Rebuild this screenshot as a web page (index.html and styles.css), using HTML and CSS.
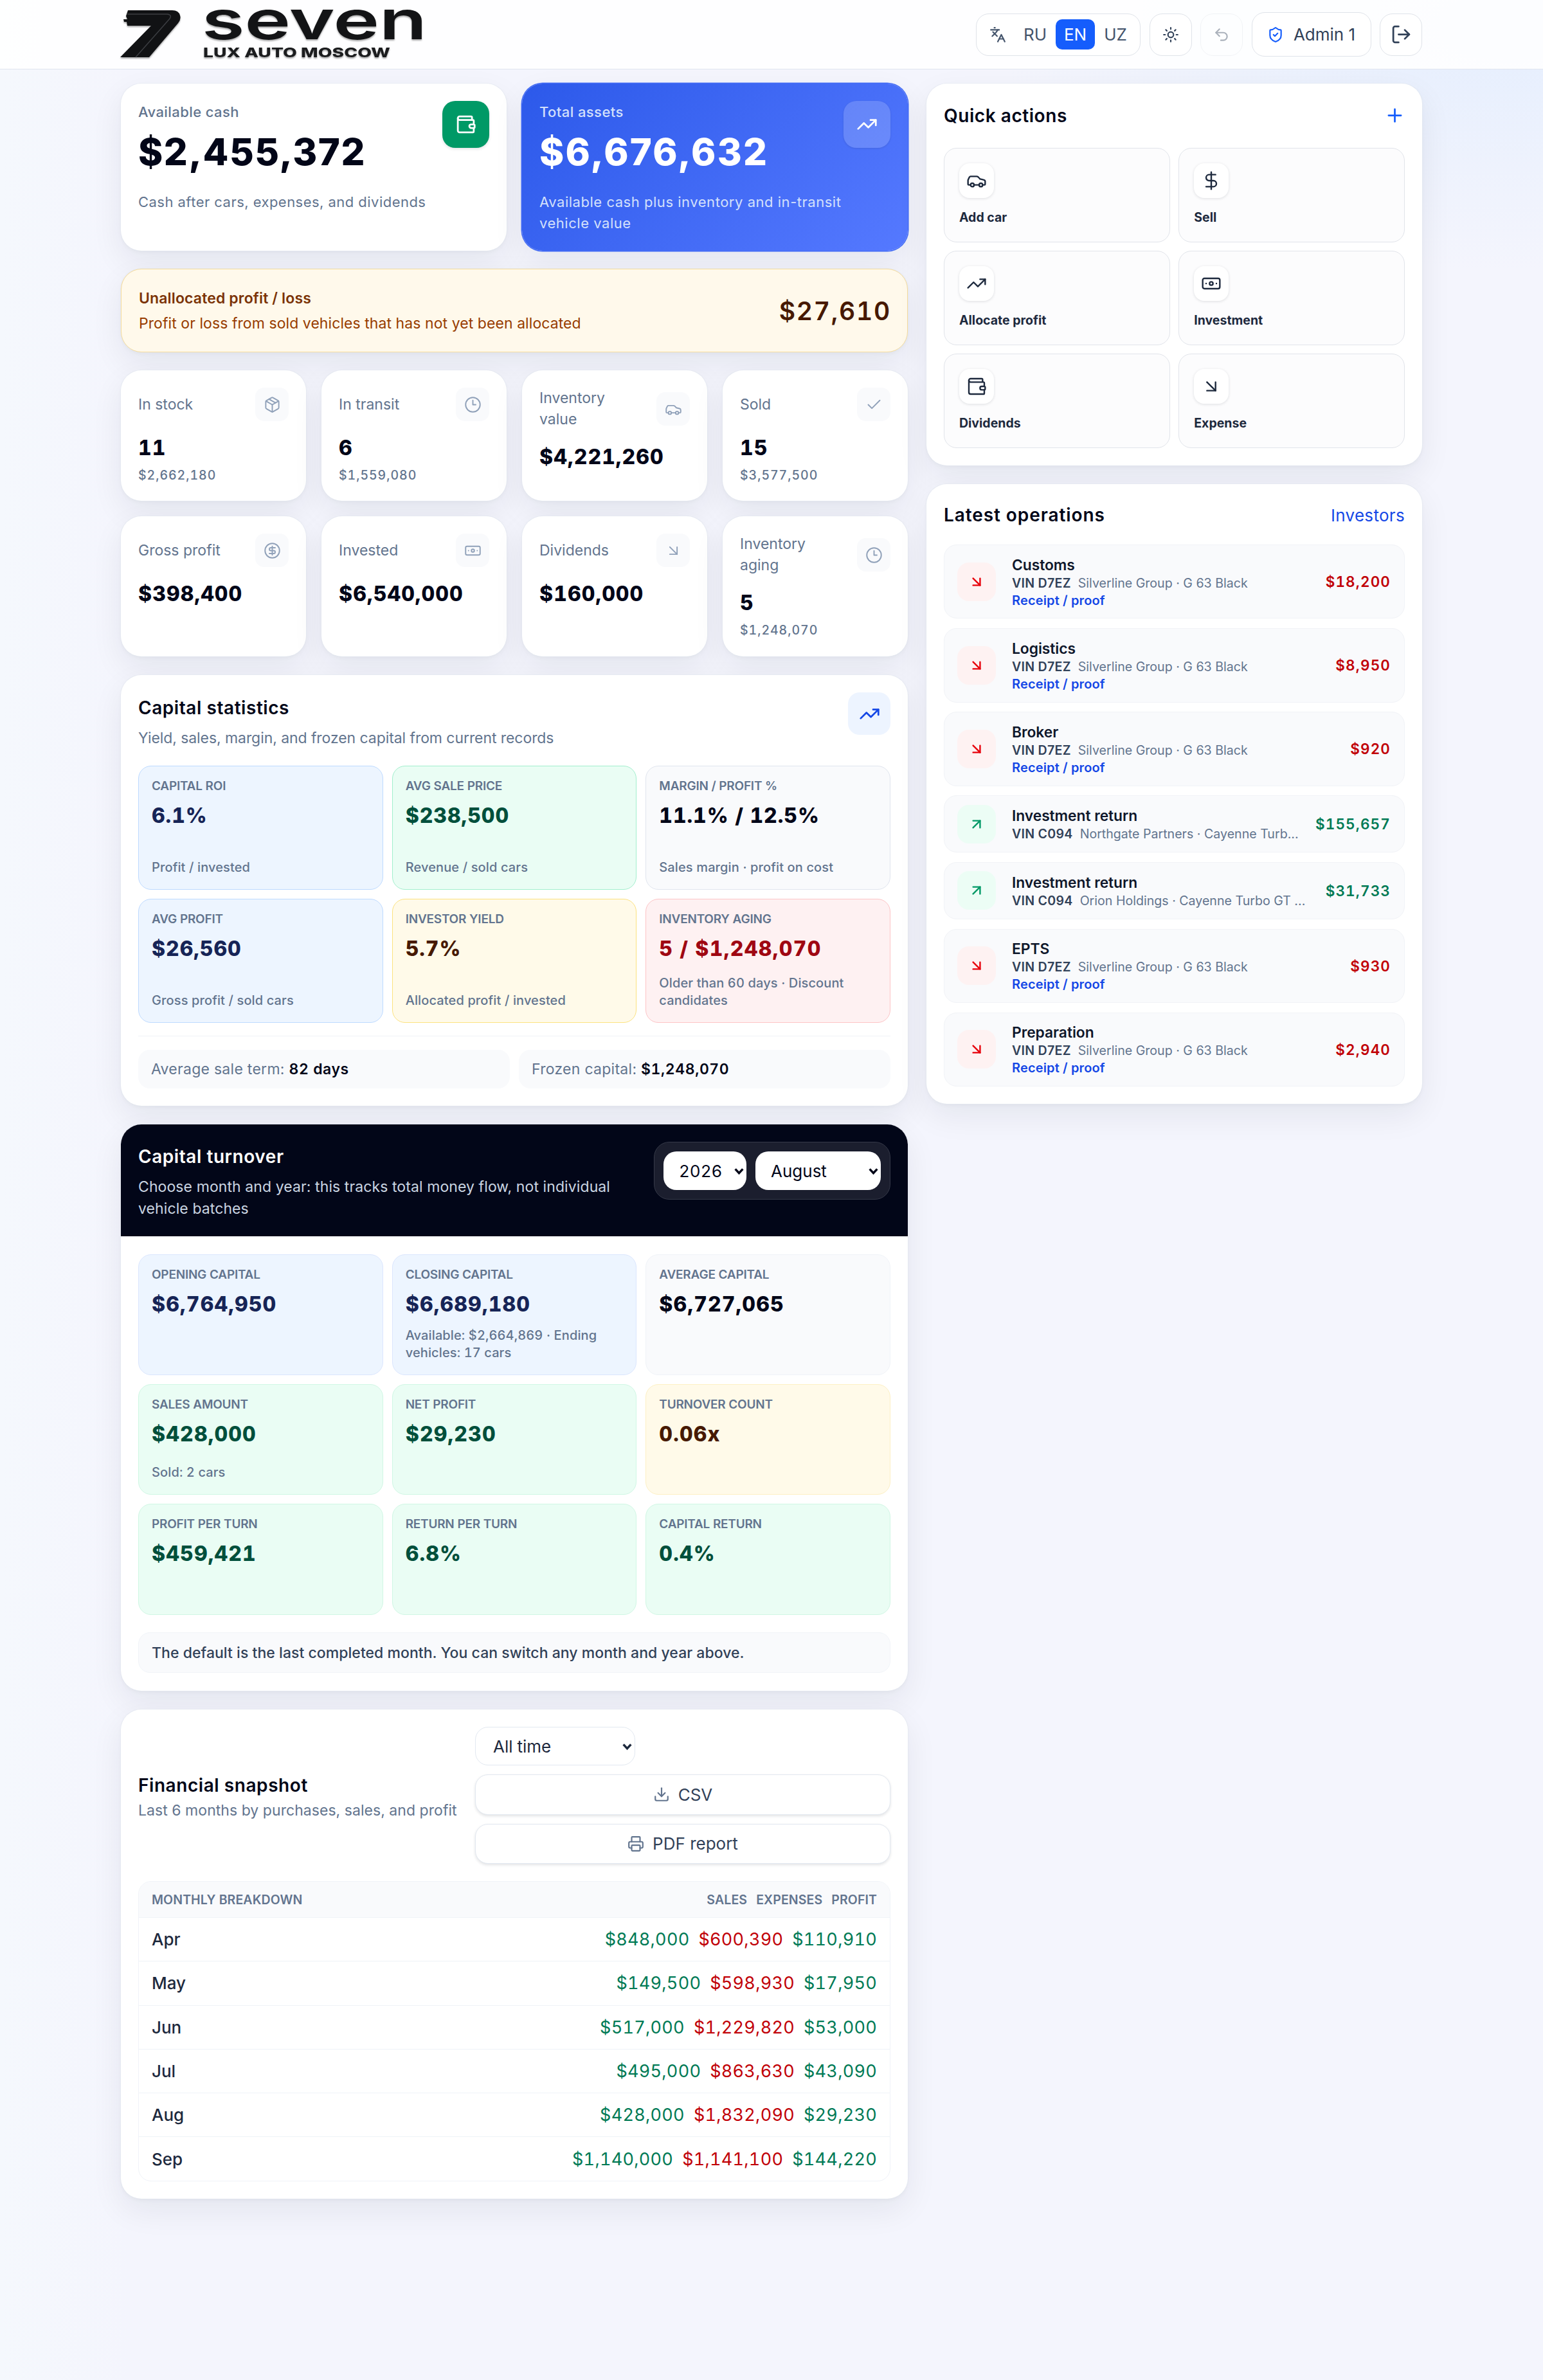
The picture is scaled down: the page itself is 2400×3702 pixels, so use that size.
FILE: index.html
```html
<!DOCTYPE html>
<html lang="en">
<head>
    <meta charset="UTF-8">
    <title>Seven Lux Auto Moscow</title>
    <link rel="stylesheet" href="styles.css">
</head>
<body>
    <!-- Icon set -->
    <svg class="sprite" xmlns="http://www.w3.org/2000/svg">
        <symbol id="i-wallet" viewBox="0 0 24 24"><path d="M19 7V4a1 1 0 0 0-1-1H5a2 2 0 0 0 0 4h15a1 1 0 0 1 1 1v4h-3a2 2 0 0 0 0 4h3a1 1 0 0 0 1-1v-2a1 1 0 0 0-1-1"/><path d="M3 5v14a2 2 0 0 0 2 2h15a1 1 0 0 0 1-1v-4"/></symbol>
        <symbol id="i-trend" viewBox="0 0 24 24"><path d="M16 7h6v6"/><path d="m22 7-8.5 8.5-5-5L2 17"/></symbol>
        <symbol id="i-box" viewBox="0 0 24 24"><path d="M11 21.73a2 2 0 0 0 2 0l7-4A2 2 0 0 0 21 16V8a2 2 0 0 0-1-1.73l-7-4a2 2 0 0 0-2 0l-7 4A2 2 0 0 0 3 8v8a2 2 0 0 0 1 1.73z"/><path d="M12 22V12"/><path d="M3.3 7 12 12l8.7-5"/><path d="m7.5 4.27 9 5.15"/></symbol>
        <symbol id="i-clock" viewBox="0 0 24 24"><circle cx="12" cy="12" r="10"/><path d="M12 6v6h4"/></symbol>
        <symbol id="i-car" viewBox="0 0 24 24"><path d="M19 17h2c.6 0 1-.4 1-1v-3c0-.9-.7-1.7-1.5-1.9C18.7 10.6 16 10 16 10s-1.3-1.4-2.2-2.3c-.5-.4-1.1-.7-1.8-.7H5c-.6 0-1.1.4-1.4.9l-1.4 2.9A3.7 3.7 0 0 0 2 12v4c0 .6.4 1 1 1h2"/><circle cx="7" cy="17" r="2"/><path d="M9 17h6"/><circle cx="17" cy="17" r="2"/></symbol>
        <symbol id="i-check" viewBox="0 0 24 24"><path d="M20 6 9 17l-5-5"/></symbol>
        <symbol id="i-coin" viewBox="0 0 24 24"><circle cx="12" cy="12" r="10"/><path d="M16 8h-6a2 2 0 1 0 0 4h4a2 2 0 1 1 0 4H8"/><path d="M12 18V6"/></symbol>
        <symbol id="i-note" viewBox="0 0 24 24"><rect x="2" y="6" width="20" height="12" rx="2"/><circle cx="12" cy="12" r="2"/><path d="M6 12h.01M18 12h.01"/></symbol>
        <symbol id="i-down" viewBox="0 0 24 24"><path d="m7 7 10 10"/><path d="M17 7v10H7"/></symbol>
        <symbol id="i-up" viewBox="0 0 24 24"><path d="M7 7h10v10"/><path d="M7 17 17 7"/></symbol>
        <symbol id="i-dollar" viewBox="0 0 24 24"><path d="M12 2v20"/><path d="M17 5H9.5a3.5 3.5 0 0 0 0 7h5a3.5 3.5 0 0 1 0 7H6"/></symbol>
        <symbol id="i-plus" viewBox="0 0 24 24"><path d="M5 12h14M12 5v14"/></symbol>
        <symbol id="i-lang" viewBox="0 0 24 24"><path d="m5 8 6 6"/><path d="m4 14 6-6 2-3"/><path d="M2 5h12"/><path d="M7 2h1"/><path d="m22 22-5-10-5 10"/><path d="M14 18h6"/></symbol>
        <symbol id="i-sun" viewBox="0 0 24 24"><circle cx="12" cy="12" r="4"/><path d="M12 2v2M12 20v2M4.93 4.93l1.41 1.41M17.66 17.66l1.41 1.41M2 12h2M20 12h2M6.34 17.66l-1.41 1.41M19.07 4.93l-1.41 1.41"/></symbol>
        <symbol id="i-undo" viewBox="0 0 24 24"><path d="M9 14 4 9l5-5"/><path d="M4 9h10.5a5.5 5.5 0 0 1 0 11H11"/></symbol>
        <symbol id="i-shield" viewBox="0 0 24 24"><path d="M20 13c0 5-3.5 7.5-7.66 8.95a1 1 0 0 1-.67-.01C7.5 20.5 4 18 4 13V6a1 1 0 0 1 1-1c2 0 4.5-1.2 6.24-2.72a1.17 1.17 0 0 1 1.52 0C14.51 3.81 17 5 19 5a1 1 0 0 1 1 1z"/><path d="m9 12 2 2 4-4"/></symbol>
        <symbol id="i-exit" viewBox="0 0 24 24"><path d="m16 17 5-5-5-5"/><path d="M21 12H9"/><path d="M9 21H5a2 2 0 0 1-2-2V5a2 2 0 0 1 2-2h4"/></symbol>
        <symbol id="i-save" viewBox="0 0 24 24"><path d="M12 15V3"/><path d="M21 15v4a2 2 0 0 1-2 2H5a2 2 0 0 1-2-2v-4"/><path d="m7 10 5 5 5-5"/></symbol>
        <symbol id="i-print" viewBox="0 0 24 24"><path d="M6 18H4a2 2 0 0 1-2-2v-5a2 2 0 0 1 2-2h16a2 2 0 0 1 2 2v5a2 2 0 0 1-2 2h-2"/><path d="M6 9V3a1 1 0 0 1 1-1h10a1 1 0 0 1 1 1v6"/><rect x="6" y="14" width="12" height="8" rx="1"/></symbol>
        <symbol id="i-chev" viewBox="0 0 16 12"><path d="M2.5 3 8 9l5.5-6"/></symbol>
    </svg>

    <header class="topbar">
        <div class="topbar-inner">
            <svg class="logo" viewBox="0 0 476 88">
                <g class="logo-mark">
                    <path d="M12 6h69q10 0 12 8 2 6-3 12L45 79H0l48-49H11l-1-6H6l-1-4h6l-2-5z"/>
                    <path class="logo-line" d="M11 12h62q8 1 4 7L24 79"/>
                </g>
                <text class="logo-name" x="127" y="51" textLength="350" lengthAdjust="spacingAndGlyphs">seven</text>
                <text class="logo-sub" x="129" y="79" textLength="291" lengthAdjust="spacingAndGlyphs">LUX AUTO MOSCOW</text>
            </svg>
            <div class="tools">
                <div class="lang">
                    <svg class="ico"><use href="#i-lang"/></svg>
                    <span>RU</span><span class="active">EN</span><span>UZ</span>
                </div>
                <button class="tool"><svg class="ico"><use href="#i-sun"/></svg></button>
                <button class="tool off"><svg class="ico"><use href="#i-undo"/></svg></button>
                <button class="tool user"><svg class="ico"><use href="#i-shield"/></svg>Admin 1</button>
                <button class="tool exit"><svg class="ico"><use href="#i-exit"/></svg></button>
            </div>
        </div>
    </header>

    <main class="layout">
        <div class="col-main">
            <div class="hero-row">
                <section class="card hero">
                    <div class="hero-text">
                        <div class="hero-label">Available cash</div>
                        <div class="hero-value">$2,455,372</div>
                        <p class="hero-sub">Cash after cars, expenses, and dividends</p>
                    </div>
                    <span class="hero-icon"><svg class="ico"><use href="#i-wallet"/></svg></span>
                </section>
                <section class="card hero blue">
                    <div class="hero-text">
                        <div class="hero-label">Total assets</div>
                        <div class="hero-value">$6,676,632</div>
                        <p class="hero-sub">Available cash plus inventory and in-transit<br>vehicle value</p>
                    </div>
                    <span class="hero-icon"><svg class="ico"><use href="#i-trend"/></svg></span>
                </section>
            </div>

            <section class="card pending">
                <div>
                    <div class="pending-title">Unallocated profit / loss</div>
                    <div class="pending-sub">Profit or loss from sold vehicles that has not yet been allocated</div>
                </div>
                <div class="pending-value">$27,610</div>
            </section>

            <div class="stat-grid">
                <div class="card stat">
                    <div class="stat-head">In stock<span class="stat-icon"><svg class="ico"><use href="#i-box"/></svg></span></div>
                    <div class="stat-value">11</div>
                    <div class="stat-sub">$2,662,180</div>
                </div>
                <div class="card stat">
                    <div class="stat-head">In transit<span class="stat-icon"><svg class="ico"><use href="#i-clock"/></svg></span></div>
                    <div class="stat-value">6</div>
                    <div class="stat-sub">$1,559,080</div>
                </div>
                <div class="card stat">
                    <div class="stat-head">Inventory<br>value<span class="stat-icon"><svg class="ico"><use href="#i-car"/></svg></span></div>
                    <div class="stat-value">$4,221,260</div>
                </div>
                <div class="card stat">
                    <div class="stat-head">Sold<span class="stat-icon"><svg class="ico"><use href="#i-check"/></svg></span></div>
                    <div class="stat-value">15</div>
                    <div class="stat-sub">$3,577,500</div>
                </div>
                <div class="card stat">
                    <div class="stat-head">Gross profit<span class="stat-icon"><svg class="ico"><use href="#i-coin"/></svg></span></div>
                    <div class="stat-value">$398,400</div>
                </div>
                <div class="card stat">
                    <div class="stat-head">Invested<span class="stat-icon"><svg class="ico"><use href="#i-note"/></svg></span></div>
                    <div class="stat-value">$6,540,000</div>
                </div>
                <div class="card stat">
                    <div class="stat-head">Dividends<span class="stat-icon"><svg class="ico"><use href="#i-down"/></svg></span></div>
                    <div class="stat-value">$160,000</div>
                </div>
                <div class="card stat">
                    <div class="stat-head">Inventory<br>aging<span class="stat-icon"><svg class="ico"><use href="#i-clock"/></svg></span></div>
                    <div class="stat-value">5</div>
                    <div class="stat-sub">$1,248,070</div>
                </div>
            </div>

            <section class="card capital">
                <div class="section-head">
                    <div>
                        <h2>Capital statistics</h2>
                        <p>Yield, sales, margin, and frozen capital from current records</p>
                    </div>
                    <span class="head-icon"><svg class="ico"><use href="#i-trend"/></svg></span>
                </div>
                <div class="tiles strong">
                    <div class="tile t-blue"><span>Capital ROI</span><b>6.1%</b><small>Profit / invested</small></div>
                    <div class="tile t-green"><span>Avg sale price</span><b>$238,500</b><small>Revenue / sold cars</small></div>
                    <div class="tile"><span>Margin / profit %</span><b>11.1% / 12.5%</b><small>Sales margin · profit on cost</small></div>
                    <div class="tile t-blue"><span>Avg profit</span><b>$26,560</b><small>Gross profit / sold cars</small></div>
                    <div class="tile t-amber"><span>Investor yield</span><b>5.7%</b><small>Allocated profit / invested</small></div>
                    <div class="tile t-red"><span>Inventory aging</span><b>5 / $1,248,070</b><small>Older than 60 days · Discount<br>candidates</small></div>
                </div>
                <div class="chips">
                    <div class="chip">Average sale term: <b>82 days</b></div>
                    <div class="chip">Frozen capital: <b>$1,248,070</b></div>
                </div>
            </section>

            <section class="card turnover">
                <div class="turnover-head">
                    <div>
                        <h2>Capital turnover</h2>
                        <p>Choose month and year: this tracks total money flow, not individual<br>vehicle batches</p>
                    </div>
                    <div class="pickers">
                        <div class="select year">2026<svg class="chev"><use href="#i-chev"/></svg></div>
                        <div class="select month">August<svg class="chev"><use href="#i-chev"/></svg></div>
                    </div>
                </div>
                <div class="turnover-body">
                    <div class="tiles">
                        <div class="tile t-blue"><span>Opening capital</span><b>$6,764,950</b></div>
                        <div class="tile t-blue"><span>Closing capital</span><b>$6,689,180</b><small>Available: $2,664,869 · Ending<br>vehicles: 17 cars</small></div>
                        <div class="tile"><span>Average capital</span><b>$6,727,065</b></div>
                        <div class="tile t-green"><span>Sales amount</span><b>$428,000</b><small>Sold: 2 cars</small></div>
                        <div class="tile t-green"><span>Net profit</span><b>$29,230</b></div>
                        <div class="tile t-amber"><span>Turnover count</span><b>0.06x</b></div>
                        <div class="tile t-green"><span>Profit per turn</span><b>$459,421</b></div>
                        <div class="tile t-green"><span>Return per turn</span><b>6.8%</b></div>
                        <div class="tile t-green"><span>Capital return</span><b>0.4%</b></div>
                    </div>
                    <div class="hint">The default is the last completed month. You can switch any month and year above.</div>
                </div>
            </section>

            <section class="card snapshot">
                <div class="snapshot-head">
                    <div class="snapshot-title">
                        <h2>Financial snapshot</h2>
                        <p>Last 6 months by purchases, sales, and profit</p>
                    </div>
                    <div class="snapshot-actions">
                        <div class="select period">All time<svg class="chev"><use href="#i-chev"/></svg></div>
                        <button class="btn"><svg class="ico"><use href="#i-save"/></svg>CSV</button>
                        <button class="btn"><svg class="ico"><use href="#i-print"/></svg>PDF report</button>
                    </div>
                </div>
                <div class="months">
                    <div class="months-head"><span>Monthly breakdown</span><div><span>Sales</span><span>Expenses</span><span>Profit</span></div></div>
                    <div class="month-row">Apr<div><i>$848,000</i><i class="out">$600,390</i><i>$110,910</i></div></div>
                    <div class="month-row">May<div><i>$149,500</i><i class="out">$598,930</i><i>$17,950</i></div></div>
                    <div class="month-row">Jun<div><i>$517,000</i><i class="out">$1,229,820</i><i>$53,000</i></div></div>
                    <div class="month-row">Jul<div><i>$495,000</i><i class="out">$863,630</i><i>$43,090</i></div></div>
                    <div class="month-row">Aug<div><i>$428,000</i><i class="out">$1,832,090</i><i>$29,230</i></div></div>
                    <div class="month-row">Sep<div><i>$1,140,000</i><i class="out">$1,141,100</i><i>$144,220</i></div></div>
                </div>
            </section>
        </div>

        <aside class="col-side">
            <section class="card side-card">
                <div class="side-head quick-head"><h2>Quick actions</h2><svg class="ico"><use href="#i-plus"/></svg></div>
                <div class="quick-grid">
                    <a class="quick"><span class="quick-icon"><svg class="ico"><use href="#i-car"/></svg></span>Add car</a>
                    <a class="quick"><span class="quick-icon"><svg class="ico"><use href="#i-dollar"/></svg></span>Sell</a>
                    <a class="quick"><span class="quick-icon"><svg class="ico"><use href="#i-trend"/></svg></span>Allocate profit</a>
                    <a class="quick"><span class="quick-icon"><svg class="ico"><use href="#i-note"/></svg></span>Investment</a>
                    <a class="quick"><span class="quick-icon"><svg class="ico"><use href="#i-wallet"/></svg></span>Dividends</a>
                    <a class="quick"><span class="quick-icon"><svg class="ico"><use href="#i-down"/></svg></span>Expense</a>
                </div>
            </section>

            <section class="card side-card">
                <div class="side-head"><h2 class="wide">Latest operations</h2><a class="more">Investors</a></div>
                <div class="ops">
                    <div class="op">
                        <span class="op-icon"><svg class="ico"><use href="#i-down"/></svg></span>
                        <div class="op-text"><h3>Customs</h3><p><b>VIN D7EZ</b>Silverline Group · G 63 Black</p><a>Receipt / proof</a></div>
                        <div class="op-sum">$18,200</div>
                    </div>
                    <div class="op">
                        <span class="op-icon"><svg class="ico"><use href="#i-down"/></svg></span>
                        <div class="op-text"><h3>Logistics</h3><p><b>VIN D7EZ</b>Silverline Group · G 63 Black</p><a>Receipt / proof</a></div>
                        <div class="op-sum">$8,950</div>
                    </div>
                    <div class="op">
                        <span class="op-icon"><svg class="ico"><use href="#i-down"/></svg></span>
                        <div class="op-text"><h3>Broker</h3><p><b>VIN D7EZ</b>Silverline Group · G 63 Black</p><a>Receipt / proof</a></div>
                        <div class="op-sum">$920</div>
                    </div>
                    <div class="op in">
                        <span class="op-icon"><svg class="ico"><use href="#i-up"/></svg></span>
                        <div class="op-text"><h3>Investment return</h3><p><b>VIN C094</b>Northgate Partners · Cayenne Turb...</p></div>
                        <div class="op-sum">$155,657</div>
                    </div>
                    <div class="op in">
                        <span class="op-icon"><svg class="ico"><use href="#i-up"/></svg></span>
                        <div class="op-text"><h3>Investment return</h3><p><b>VIN C094</b>Orion Holdings · Cayenne Turbo GT ...</p></div>
                        <div class="op-sum">$31,733</div>
                    </div>
                    <div class="op">
                        <span class="op-icon"><svg class="ico"><use href="#i-down"/></svg></span>
                        <div class="op-text"><h3>EPTS</h3><p><b>VIN D7EZ</b>Silverline Group · G 63 Black</p><a>Receipt / proof</a></div>
                        <div class="op-sum">$930</div>
                    </div>
                    <div class="op">
                        <span class="op-icon"><svg class="ico"><use href="#i-down"/></svg></span>
                        <div class="op-text"><h3>Preparation</h3><p><b>VIN D7EZ</b>Silverline Group · G 63 Black</p><a>Receipt / proof</a></div>
                        <div class="op-sum">$2,940</div>
                    </div>
                </div>
            </section>
        </aside>
    </main>
</body>
</html>
```
FILE: styles.css
```css
* {
    box-sizing: border-box;
}
body {
    margin: 0;
    min-height: 3702px;
    font-family: Inter, "Liberation Sans", sans-serif;
    font-size: 23px;
    color: #020618;
    background:
        radial-gradient(ellipse 800px 380px at 2350px 40px, rgba(214, 231, 254, 0.5), transparent),
        linear-gradient(90deg, #f5f8fd 0, #f4f5fd 200px, #f4f5fd 100%);
}
h2, h3, p {
    margin: 0;
    font-weight: 400;
}
button {
    font-family: inherit;
}
.sprite {
    display: none;
}
.ico {
    width: 26px;
    height: 26px;
    flex-shrink: 0;
    fill: none;
    stroke: currentColor;
    stroke-width: 2;
    stroke-linecap: round;
    stroke-linejoin: round;
}

/* Top bar */
.topbar {
    height: 108px;
    background: rgba(255, 255, 255, 0.88);
    border-bottom: 1px solid #e0e5ee;
}
.topbar-inner {
    width: 2024px;
    height: 107px;
    margin: 0 auto;
    display: flex;
    justify-content: space-between;
    align-items: center;
}
.logo {
    width: 476px;
    height: 88px;
    margin-left: -1px;
    overflow: visible;
    filter: drop-shadow(0 2px 1px rgba(0, 0, 0, 0.35));
}
.logo-mark path {
    fill: #111214;
}
.logo-mark .logo-line {
    fill: none;
    stroke: #3c3e42;
    stroke-width: 1.5;
}
.logo-name {
    font-size: 84px;
    font-weight: 600;
    fill: #131416;
}
.logo-sub {
    font-size: 20px;
    font-weight: 800;
    fill: #1b1c1e;
}
.tools {
    display: flex;
    align-items: center;
    gap: 13.5px;
}
.lang, .tool {
    height: 66px;
    display: flex;
    align-items: center;
    background: #fff;
    border: 1px solid #dfe3e9;
    border-radius: 20px;
    color: #45556c;
    font-size: 26px;
}
.lang {
    width: 256px;
    padding: 0 6px 0 20px;
    gap: 1.5px;
}
.lang .ico {
    margin-right: 13px;
}
.lang span {
    width: 61px;
    height: 47px;
    line-height: 47px;
    text-align: center;
    border-radius: 10px;
}
.lang .active {
    background: #155dfc;
    color: #fff;
}
.tool {
    width: 66px;
    padding: 0;
    justify-content: center;
    color: #314158;
}
.tool.off {
    opacity: 0.4;
}
.tool.user {
    width: 186px;
    height: 69px;
    gap: 15px;
}
.user .ico {
    color: #155dfc;
}
.exit .ico {
    width: 33px;
    height: 33px;
}

/* Page grid */
.layout {
    width: 2024px;
    margin: 22px auto 0;
    display: grid;
    grid-template-columns: 1224px 771px;
    gap: 29px;
    align-items: start;
}
.col-main, .col-side {
    display: flex;
    flex-direction: column;
    gap: 29px;
}
.card {
    background: #fff;
    border-radius: 32px;
    box-shadow: 0 0 0 1px rgba(226, 232, 240, 0.5), 0 3px 6px rgba(15, 23, 42, 0.03), 0 18px 50px rgba(15, 23, 42, 0.07);
}
h2 {
    font-size: 28px;
    font-weight: 600;
    line-height: 40px;
    letter-spacing: 0.02em;
}
h2.wide {
    letter-spacing: 0.033em;
}

/* Balance cards */
.hero-row {
    display: grid;
    grid-template-columns: 1fr 1fr;
    gap: 24px;
    margin-bottom: -1px;
}
.hero {
    display: flex;
    justify-content: space-between;
    height: 260px;
    padding: 28px 27px 0;
    color: #62748e;
}
.hero-label {
    font-size: 22px;
    font-weight: 500;
    line-height: 32px;
    letter-spacing: 0.019em;
}
.hero-value {
    margin-top: 16px;
    font-size: 58px;
    font-weight: 800;
    line-height: 60px;
    letter-spacing: 0.027em;
    color: #020618;
}
.hero-sub {
    margin-top: 32px;
    font-size: 22px;
    line-height: 33px;
    letter-spacing: 0.021em;
    white-space: nowrap;
}
.hero-icon {
    width: 73px;
    height: 73px;
    flex-shrink: 0;
    display: flex;
    align-items: center;
    justify-content: center;
    border-radius: 20px;
    background: #009966;
    color: #fff;
    margin-top: -1px;
    box-shadow: 0 2px 4px rgba(15, 23, 42, 0.12);
}
.hero-icon .ico {
    width: 33px;
    height: 33px;
}
.hero.blue {
    background: linear-gradient(135deg, #2c59ea, #5579ff);
    box-shadow: 0 0 0 1.5px #416af5, 0 18px 50px rgba(15, 23, 42, 0.07);
    color: #d3e0fb;
}
.blue .hero-value {
    color: #fff;
    letter-spacing: 0.038em;
}
.blue .hero-icon {
    background: rgba(255, 255, 255, 0.17);
    box-shadow: 0 1px 3px rgba(15, 23, 42, 0.12);
}
.blue .hero-sub {
    letter-spacing: 0.024em;
}

/* Unallocated profit */
.pending {
    height: 130px;
    margin-bottom: -1px;
    padding: 0 27px;
    display: flex;
    justify-content: space-between;
    align-items: center;
    border: 1px solid #f6dc9d;
    background: #fff9eb;
}
.pending-title {
    font-weight: 600;
    line-height: 34px;
    letter-spacing: 0.006em;
    color: #7b3306;
}
.pending-sub {
    margin-top: 6px;
    line-height: 33px;
    letter-spacing: 0.003em;
    color: #973c00;
}
.pending-value {
    font-size: 39px;
    font-weight: 600;
    letter-spacing: 0.045em;
    margin-right: -2px;
    font-variant-numeric: tabular-nums;
    color: #461901;
}

/* Small counters */
.stat-grid {
    display: grid;
    grid-template-columns: repeat(4, 1fr);
    grid-template-rows: 203px 218px;
    gap: 24px;
}
.stat {
    padding: 27px 27px 0;
}
.stat-head {
    min-height: 52px;
    display: grid;
    grid-template-columns: 1fr 52px;
    align-items: center;
    line-height: 33px;
    color: #62748e;
}
.stat-head br + .stat-icon {
    grid-column: 2;
    grid-row: 1 / 3;
}
.stat-icon {
    width: 52px;
    height: 52px;
    display: flex;
    align-items: center;
    justify-content: center;
    border-radius: 14px;
    background: #f9fafc;
    color: #90a1b9;
}
.stat-icon .ico {
    width: 27px;
    height: 27px;
    stroke-width: 1.7;
}
.stat-value {
    margin-top: 20px;
    font-size: 32px;
    font-weight: 800;
    line-height: 44px;
    letter-spacing: 0.034em;
    font-variant-numeric: tabular-nums;
}
.stat-sub {
    margin-top: 7px;
    font-size: 19.5px;
    font-weight: 500;
    line-height: 27px;
    letter-spacing: 0.05em;
    font-variant-numeric: tabular-nums;
    color: #62748e;
}

/* Capital statistics */
.capital {
    padding: 27px;
    height: 670px;
}
.section-head {
    display: flex;
    justify-content: space-between;
    height: 114px;
}
.section-head h2 {
    margin-top: 4px;
}
.section-head p {
    margin-top: 11px;
    line-height: 33px;
    letter-spacing: -0.003em;
    color: #62748e;
}
.head-icon {
    width: 66px;
    height: 66px;
    display: flex;
    align-items: center;
    justify-content: center;
    border-radius: 18px;
    background: #edf4ff;
    color: #1447e6;
}
.head-icon .ico {
    width: 33px;
    height: 33px;
}
.tiles {
    display: grid;
    grid-template-columns: repeat(3, 1fr);
    grid-template-rows: 187.5px 172.5px 172.5px;
    gap: 14px;
}
.tiles.strong {
    grid-template-rows: 193px 193px;
}
.tile {
    display: flex;
    flex-direction: column;
    padding: 21px 20px 20px;
    border: 1px solid #f0f3f8;
    border-radius: 20px;
    background: #f9fafc;
    font-variant-numeric: tabular-nums;
}
.tile span {
    font-size: 19px;
    font-weight: 600;
    line-height: 20px;
    letter-spacing: -0.012em;
    text-transform: uppercase;
    color: #62748e;
}
.tile b {
    margin-top: 14px;
    font-size: 32px;
    font-weight: 800;
    line-height: 44px;
    letter-spacing: 0.036em;
}
.tile small {
    margin-top: auto;
    font-size: 20px;
    font-weight: 500;
    line-height: 27px;
    letter-spacing: 0.006em;
    color: #62748e;
    white-space: nowrap;
}
.t-blue {
    background: #edf5ff;
    border-color: #dbe6fe;
}
.t-blue b {
    color: #162456;
}
.t-green {
    background: #eafdf4;
    border-color: #d0f7e4;
}
.t-green b {
    color: #004f3b;
}
.t-amber {
    background: #fffae9;
    border-color: #fdf0c4;
}
.t-amber b {
    color: #461901;
}
.t-red {
    background: #fef1f2;
}
.t-red b {
    color: #9f0712;
}
.strong .tile {
    border-color: #e0e5ee;
}
.strong .tile b {
    letter-spacing: 0.03em;
}
.strong .t-blue {
    border-color: #bddaff;
}
.strong .t-green {
    border-color: #a2efcd;
}
.strong .t-amber {
    border-color: #fce27f;
}
.strong .t-red {
    border-color: #fdc4c6;
}
.strong .t-red b {
    letter-spacing: 0.042em;
}
.chips {
    display: grid;
    grid-template-columns: 1fr 1fr;
    gap: 14px;
    margin-top: 20px;
    padding-top: 21px;
    border-top: 1px solid #eff3f7;
}
.chip {
    height: 60px;
    padding: 0 20px;
    line-height: 60px;
    border-radius: 18px;
    background: #f9fafc;
    letter-spacing: 0.012em;
    color: #62748e;
}
.chip b {
    font-weight: 600;
    letter-spacing: 0.025em;
    color: #020618;
    font-variant-numeric: tabular-nums;
}

/* Capital turnover */
.turnover {
    height: 881px;
    overflow: hidden;
}
.turnover-head {
    display: flex;
    justify-content: space-between;
    height: 174px;
    padding: 27px;
    background: #020618;
    color: #fff;
}
.turnover-head h2 {
    margin-top: 3px;
}
.turnover-head p {
    margin-top: 11px;
    line-height: 33.5px;
    letter-spacing: 0.004em;
    color: #cad5e2;
}
.pickers {
    display: flex;
    gap: 14px;
    width: 368px;
    height: 90px;
    padding: 14px;
    border: 1px solid #353948;
    border-radius: 24px;
    background: #1b1e2e;
}
.select {
    height: 60px;
    display: flex;
    align-items: center;
    justify-content: space-between;
    padding: 0 3px 0 24px;
    border-radius: 20px;
    background: #fff;
    color: #020618;
    font-size: 26px;
    font-variant-numeric: tabular-nums;
}
.chev {
    width: 17px;
    height: 13px;
    fill: none;
    stroke: currentColor;
    stroke-width: 3.2;
}
.select.year {
    width: 129px;
}
.select.month {
    width: 195px;
}
.turnover-body {
    padding: 28px 27px;
}
.hint {
    height: 63px;
    margin-top: 27px;
    padding: 0 20px;
    border: 1px solid #f1f4f8;
    border-radius: 18px;
    background: #f9fafc;
    font-weight: 500;
    line-height: 63px;
    letter-spacing: 0.002em;
    color: #314158;
}

/* Financial snapshot */
.snapshot {
    height: 761px;
    padding: 27px;
}
.snapshot-head {
    display: flex;
    justify-content: space-between;
    align-items: center;
    height: 213px;
}
.snapshot-title p {
    margin-top: 3px;
    line-height: 33px;
    letter-spacing: 0.002em;
    color: #62748e;
}
.snapshot-title {
    margin-top: 4px;
}
.snapshot-actions {
    width: 646px;
    display: flex;
    flex-direction: column;
    gap: 14px;
}
.select.period {
    width: 249px;
    padding-left: 27px;
    border: 1px solid #e2e8f0;
    color: #1d293d;
}
.btn {
    height: 62.5px;
    display: flex;
    align-items: center;
    justify-content: center;
    gap: 13px;
    border: 1px solid #e2e8f0;
    border-radius: 20px;
    background: #fff;
    box-shadow: 0 2px 4px rgba(15, 23, 42, 0.12);
    color: #314158;
    font-size: 26px;
}
.btn .ico {
    color: #62748e;
}
.months {
    margin-top: 27px;
    border: 1px solid #f0f3f8;
    border-radius: 20px;
    overflow: hidden;
}
.months-head {
    height: 55px;
    display: flex;
    justify-content: space-between;
    align-items: center;
    padding: 0 20px;
    background: #f9fafc;
    font-size: 19.5px;
    font-weight: 600;
    text-transform: uppercase;
    letter-spacing: 0.006em;
    color: #62748e;
}
.months-head div, .month-row div {
    display: flex;
    gap: 14px;
}
.month-row {
    height: 68.3px;
    display: flex;
    justify-content: space-between;
    align-items: center;
    padding: 0 20px;
    border-top: 1px solid #eff3f7;
    font-size: 26px;
    font-weight: 500;
    color: #1d293d;
}
.month-row i {
    font-style: normal;
    font-size: 27px;
    font-weight: 400;
    letter-spacing: 0.01em;
    font-variant-numeric: tabular-nums;
    color: #007a55;
}
.month-row .out {
    color: #c10007;
}

/* Side column */
.side-card {
    padding: 27px;
}
.side-head {
    display: flex;
    justify-content: space-between;
    align-items: center;
    height: 67px;
    padding-bottom: 25px;
}
.quick-head {
    height: 73px;
    padding-bottom: 28px;
}
.side-head .ico {
    width: 33px;
    height: 33px;
    margin-right: -1px;
    color: #155dfc;
}
.more {
    font-size: 26px;
    letter-spacing: 0.012em;
    color: #1447e6;
}
.quick-grid {
    display: grid;
    grid-template-columns: 1fr 1fr;
    grid-auto-rows: 146.7px;
    gap: 13.5px;
}
.quick {
    padding: 23px;
    border: 1px solid #e1e4ea;
    border-radius: 20px;
    background: #fcfcfd;
    font-size: 19.5px;
    font-weight: 700;
    line-height: 27px;
    color: #1d293d;
}
.quick-icon {
    width: 54px;
    height: 54px;
    display: flex;
    align-items: center;
    justify-content: center;
    margin-bottom: 17px;
    border-radius: 16px;
    background: #fff;
    box-shadow: 0 1px 4px rgba(15, 23, 42, 0.13);
}
.quick-icon .ico {
    width: 32px;
    height: 32px;
    stroke-width: 1.8;
}
.ops {
    display: flex;
    flex-direction: column;
    gap: 14.7px;
}
.op {
    display: flex;
    align-items: center;
    height: 115.4px;
    padding: 0 21px 0 20px;
    border: 1px solid #f1f3f7;
    border-radius: 20px;
    background: #f9fafc;
}
.op.in {
    height: 89px;
}
.op-icon {
    width: 60px;
    height: 60px;
    display: flex;
    align-items: center;
    justify-content: center;
    flex-shrink: 0;
    margin-right: 25px;
    border-radius: 18px;
    background: #fef2f2;
    color: #e7000b;
}
.op-icon .ico {
    width: 26px;
    height: 26px;
    stroke-width: 2.2;
}
.in .op-icon {
    background: #ecfdf5;
    color: #009966;
}
.op-text {
    flex: 1;
    padding-top: 2px;
    white-space: nowrap;
}
.op-text h3 {
    font-size: 22.8px;
    font-weight: 600;
    line-height: 30px;
    letter-spacing: -0.002em;
    color: #0f172b;
}
.op-text p {
    font-size: 19.6px;
    line-height: 27px;
    color: #62748e;
}
.op-text p b {
    margin-right: 11px;
    font-weight: 600;
    letter-spacing: 0.014em;
    color: #314158;
}
.op-text a {
    display: block;
    font-size: 20px;
    font-weight: 600;
    line-height: 27px;
    letter-spacing: 0.007em;
    color: #1447e6;
}
.op-sum {
    font-size: 22.5px;
    font-weight: 600;
    letter-spacing: 0.05em;
    font-variant-numeric: tabular-nums;
    color: #c10007;
}
.in .op-sum {
    color: #007a55;
}
```
